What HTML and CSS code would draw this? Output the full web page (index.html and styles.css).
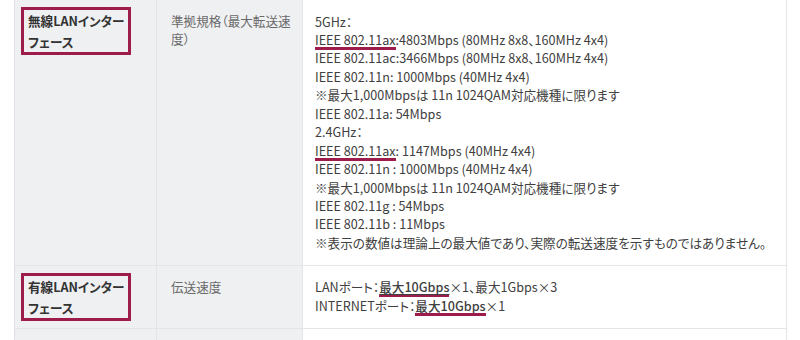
FILE: index.html
```html
<!DOCTYPE html>
<html lang="ja">
<head>
<meta charset="utf-8">
<title>仕様</title>
<link rel="stylesheet" href="styles.css">
</head>
<body>
<div class="wrap">
  <table class="spec">
    <tr>
      <th class="c1"><span class="mark">無線LANインターフェース</span></th>
      <td class="c2">準拠規格（最大転送速度）</td>
      <td class="c3">
        5GHz：<br>
        <span class="hl">IEEE 802.11ax</span>:4803Mbps (80MHz 8x8、160MHz 4x4)<br>
        IEEE 802.11ac:3466Mbps (80MHz 8x8、160MHz 4x4)<br>
        IEEE 802.11n: 1000Mbps (40MHz 4x4)<br>
        ※最大1,000Mbpsは 11n 1024QAM対応機種に限ります<br>
        IEEE 802.11a: 54Mbps<br>
        2.4GHz：<br>
        <span class="hl">IEEE 802.11ax</span>: 1147Mbps (40MHz 4x4)<br>
        IEEE 802.11n : 1000Mbps (40MHz 4x4)<br>
        ※最大1,000Mbpsは 11n 1024QAM対応機種に限ります<br>
        IEEE 802.11g : 54Mbps<br>
        IEEE 802.11b : 11Mbps<br>
        ※表示の数値は理論上の最大値であり、実際の転送速度を示すものではありません。
      </td>
    </tr>
    <tr>
      <th class="c1"><span class="mark">有線LANインターフェース</span></th>
      <td class="c2">伝送速度</td>
      <td class="c3">
        LANポート：<span class="hl strong">最大10Gbps</span>×1、最大1Gbps×3<br>
        INTERNETポート：<span class="hl strong">最大10Gbps</span>×1
      </td>
    </tr>
    <tr class="rest">
      <th class="c1"></th>
      <td class="c2"></td>
      <td class="c3"></td>
    </tr>
  </table>
</div>
</body>
</html>
```
FILE: styles.css
```css
* { box-sizing: border-box; }
html, body { margin: 0; padding: 0; background: #fff; }
body {
  font-family: "Noto Sans CJK JP", "Noto Sans", sans-serif;
  font-size: 12.6px;
  font-feature-settings: "palt";
  color: #404040;
}
.wrap { padding-left: 14px; }
.spec {
  width: 773px;
  table-layout: fixed;
  border-collapse: separate;
  border-spacing: 0;
  border-left: 1px solid #dde0e4;
}
.spec th, .spec td {
  vertical-align: top;
  text-align: left;
  border-right: 1px solid #e3e5e8;
  border-bottom: 1px solid #e3e5e8;
  line-height: 18.45px;
}
.c1 {
  width: 142px;
  background: #eff0f2;
  padding: 7px 4px 4px 6px;
  font-weight: bold;
  color: #333;
}
.c2 {
  width: 146px;
  background: #eff0f2;
  color: #6a6a6a;
  padding: 12px 4px 12px 14px;
}
.c3 {
  width: 484px;
  background: #fff;
  padding: 12.5px 12px 12.5px 12px;
}
.mark {
  display: block;
  width: 110px;
  border: 3px solid #9e1c4c;
  padding: 0 3px 0 4px;
  line-height: 21px;
}
.hl {
  position: relative;
  text-decoration: underline;
  text-decoration-thickness: 1px;
  text-underline-offset: 2px;
}
.hl::after {
  content: "";
  position: absolute;
  left: 0;
  right: 0;
  bottom: -1px;
  height: 2.5px;
  background: #9e1c4c;
}
.strong { font-weight: 500; }
.rest .c1, .rest .c2, .rest .c3 { height: 40px; }
```
